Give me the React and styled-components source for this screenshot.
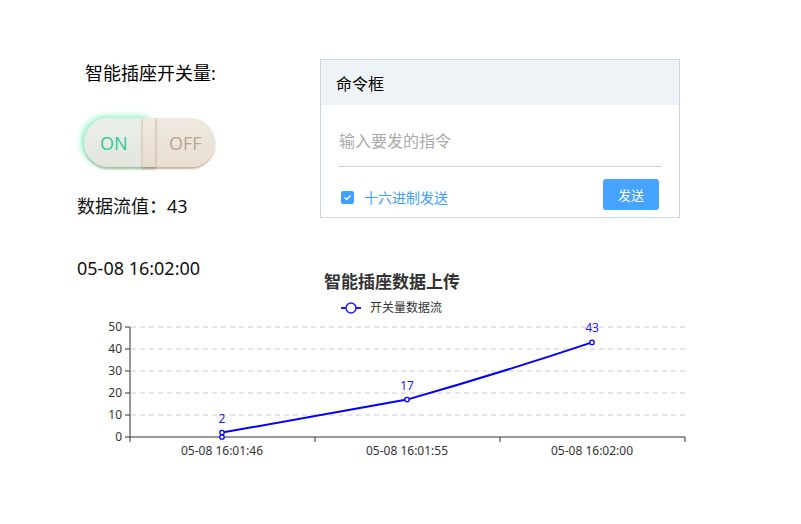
import React from 'react';
import styled, { createGlobalStyle } from 'styled-components';

const GlobalStyle = createGlobalStyle`
  body {
    margin: 0;
    background: #fff;
    font-family: "Noto Sans", "Noto Sans CJK SC", sans-serif;
  }
`;

const Page = styled.div`
  width: 801px;
  height: 524px;
  overflow: hidden;
`;

const TopRow = styled.div`
  display: flex;
  padding: 59px 0 0 77px;
`;

const LeftColumn = styled.div`
  width: 243px;
  padding-top: 2px;
`;

const Heading = styled.div`
  margin-left: 8px;
  font-size: 18px;
  line-height: 24px;
  color: #000;
`;

const Toggle = styled.div`
  position: relative;
  display: flex;
  width: 131px;
  height: 49px;
  margin: 33px 0 0 7px;
  border-radius: 25px;
  box-shadow: 0 2px 2px rgba(150, 118, 86, 0.55);
`;

const Half = styled.div`
  flex: 1;
  display: flex;
  align-items: center;
  justify-content: center;
  font-family: "Open Sans", sans-serif;
  font-size: 18px;
  font-weight: 400;
  color: ${p => (p.$on ? '#2fcb94' : '#b9a390')};
  background: ${p => (p.$on
    ? 'linear-gradient(#ecefea, #e2e6df)'
    : 'linear-gradient(#efe9df, #e8dfd1)')};
  border-radius: ${p => (p.$on ? '25px 0 0 25px' : '0 25px 25px 0')};
  box-shadow: ${p => (p.$on ? '-2px -1px 7px rgba(70, 230, 160, 0.75)' : 'none')};
  padding: ${p => (p.$on ? '0 6px 0 0' : '0 0 0 6px')};
`;

const Knob = styled.div`
  position: absolute;
  left: 58px;
  top: 0;
  width: 12px;
  height: 49px;
  background: linear-gradient(#f1ebe1, #e6dccd);
  border-left: 1px solid #ddd3c4;
  border-right: 1px solid #d6cab8;
  box-shadow: 0 2px 2px rgba(150, 118, 86, 0.5);
`;

const InfoText = styled.div`
  margin-top: ${p => p.$gap}px;
  font-size: 18px;
  line-height: 24px;
  color: #111;
`;

const Card = styled.div`
  width: 358px;
  height: 157px;
  border: 1px solid #cdd7df;
  display: flex;
  flex-direction: column;
`;

const CardHeader = styled.div`
  height: 45px;
  background: #eef3f8;
  display: flex;
  align-items: center;
  padding-left: 15px;
  font-size: 16px;
  color: #000;
`;

const InputWrap = styled.div`
  margin: 18px 18px 0;
  padding-bottom: 7px;
  border-bottom: 1px solid #c9d2da;
`;

const CommandInput = styled.input`
  width: 100%;
  height: 36px;
  border: none;
  outline: none;
  padding: 0 0 0 0;
  font-family: inherit;
  font-size: 16px;
  color: #333;
  background: transparent;
  &::placeholder {
    color: #aaa;
  }
`;

const Footer = styled.div`
  display: flex;
  align-items: center;
  justify-content: space-between;
  padding: 12px 20px 0;
`;

const CheckLabel = styled.label`
  display: flex;
  align-items: center;
  gap: 10px;
  padding-top: 5px;
  font-size: 14px;
  color: #409eff;
`;

const CheckBox = styled.span`
  width: 13px;
  height: 13px;
  border-radius: 2px;
  background: #409eff;
  display: flex;
  align-items: center;
  justify-content: center;
`;

const SendButton = styled.button`
  width: 56px;
  height: 31px;
  border: none;
  border-radius: 3px;
  background: #46a3ff;
  color: #fff;
  font-family: inherit;
  font-size: 13px;
  cursor: pointer;
`;

const ChartWrap = styled.div`
  margin-top: -15px;
  height: 210px;
`;

const gridValues = [0, 10, 20, 30, 40, 50];
const xLabels = ['05-08 16:01:46', '05-08 16:01:55', '05-08 16:02:00'];
const points = [
  { x: 222, v: 2 },
  { x: 407, v: 17 },
  { x: 592, v: 43 },
];
const yOf = v => 437 - v * 2.2;

const Chart = () => (
  <svg width="801" height="210">
    <g transform="translate(0,-265)" fontFamily='"Noto Sans", "Noto Sans CJK SC", sans-serif'>
      <text x="392" y="288" textAnchor="middle" fontSize="17" fontWeight="700" fill="#333">
        智能插座数据上传
      </text>
      <line x1="341" y1="308" x2="361" y2="308" stroke="#1a1aff" strokeWidth="2" />
      <circle cx="351" cy="308" r="5" fill="#fff" stroke="#1a1aff" strokeWidth="1.5" />
      <text x="370" y="312" fontSize="12" fill="#333">开关量数据流</text>

      {gridValues.map(v => (
        <g key={v}>
          {v > 0 && (
            <line x1="131" y1={yOf(v)} x2="685" y2={yOf(v)} stroke="#ccc" strokeDasharray="5 4" />
          )}
          <line x1="125" y1={yOf(v)} x2="130" y2={yOf(v)} stroke="#333" />
          <text x="122" y={yOf(v) + 4} textAnchor="end" fontSize="12" fill="#333">{v}</text>
        </g>
      ))}
      <line x1="130" y1="327" x2="130" y2="437" stroke="#333" />
      <line x1="130" y1="437" x2="685" y2="437" stroke="#333" />
      {[130, 315, 500, 685].map(x => (
        <line key={x} x1={x} y1="437" x2={x} y2="442" stroke="#333" />
      ))}
      {xLabels.map((l, i) => (
        <text key={l} x={points[i].x} y="455" textAnchor="middle" fontSize="12" fill="#333">{l}</text>
      ))}

      <path
        d={`M222 ${yOf(2)} L407 ${yOf(17)} Q500 ${yOf(29)} 592 ${yOf(43)}`}
        fill="none"
        stroke="#0000ff"
        strokeWidth="2"
      />
      <circle cx="222" cy="437" r="2.2" fill="#fff" stroke="#0000ff" strokeWidth="1.3" />
      {points.map(p => (
        <g key={p.x}>
          <circle cx={p.x} cy={yOf(p.v)} r="2.2" fill="#fff" stroke="#0000ff" strokeWidth="1.3" />
          <text x={p.x} y={yOf(p.v) - 10} textAnchor="middle" fontSize="12" fill="#1a1aff">{p.v}</text>
        </g>
      ))}
    </g>
  </svg>
);

const App = () => (
  <Page>
    <GlobalStyle />
    <TopRow>
      <LeftColumn>
        <Heading>智能插座开关量:</Heading>
        <Toggle>
          <Half $on>ON</Half>
          <Half>OFF</Half>
          <Knob />
        </Toggle>
        <InfoText $gap={27}>数据流值：43</InfoText>
        <InfoText $gap={38}>05-08 16:02:00</InfoText>
      </LeftColumn>
      <Card>
        <CardHeader>命令框</CardHeader>
        <InputWrap>
          <CommandInput placeholder="输入要发的指令" />
        </InputWrap>
        <Footer>
          <CheckLabel>
            <CheckBox>
              <svg width="9" height="9" viewBox="0 0 9 9">
                <path d="M1.5 4.6 L3.6 6.6 L7.6 2.4" fill="none" stroke="#fff" strokeWidth="1.4" />
              </svg>
            </CheckBox>
            十六进制发送
          </CheckLabel>
          <SendButton>发送</SendButton>
        </Footer>
      </Card>
    </TopRow>
    <ChartWrap>
      <Chart />
    </ChartWrap>
  </Page>
);

export default App;
